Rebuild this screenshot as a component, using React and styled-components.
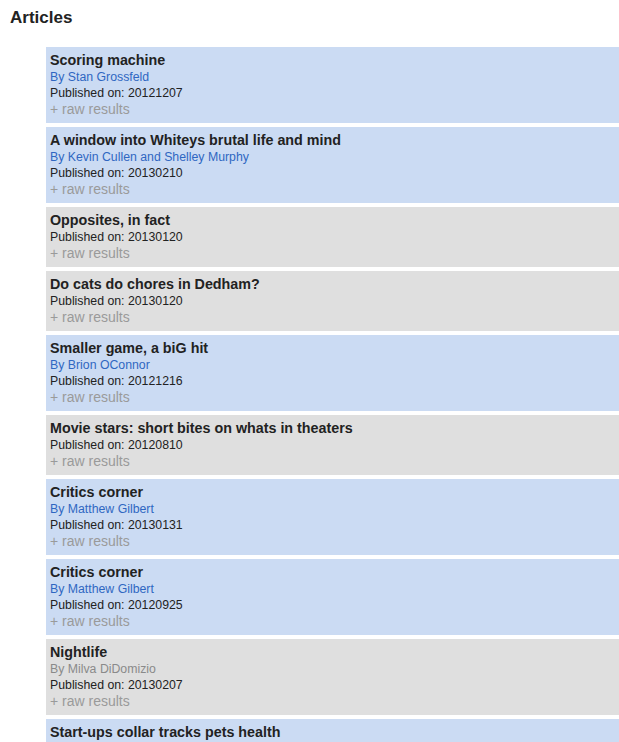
import React from "react";
import styled, { createGlobalStyle } from "styled-components";

const GlobalStyle = createGlobalStyle`
  html, body {
    margin: 0;
    padding: 0;
    background: #ffffff;
    font-family: "Liberation Sans", Arial, Helvetica, sans-serif;
  }
`;

const Page = styled.div`
  padding: 8px 0 0 10px;
`;

const Heading = styled.h2`
  margin: 0;
  font-size: 17px;
  line-height: 20px;
  font-weight: bold;
  color: #222222;
`;

const List = styled.ul`
  list-style: none;
  margin: 19px 0 0 36px;
  padding: 0;
  display: flex;
  flex-direction: column;
  gap: 4px;
`;

const Card = styled.li`
  background: ${(p) => (p.$highlight ? "#cbdbf3" : "#dfdfdf")};
  padding: 4px 4px 6px 4px;
  display: flex;
  flex-direction: column;
`;

const Title = styled.div`
  font-size: 14.3px;
  line-height: 18px;
  font-weight: bold;
  color: #222222;
`;

const Byline = styled.div`
  font-size: 12.3px;
  line-height: 16px;
  color: ${(p) => (p.$muted ? "#8a8a8a" : "#2f67c2")};
`;

const Meta = styled.div`
  font-size: 12.3px;
  line-height: 16px;
  color: #222222;
`;

const Raw = styled.div`
  font-size: 14px;
  line-height: 16px;
  color: #9a9a9a;
`;

const articles = [
  { title: "Scoring machine", by: "By Stan Grossfeld", date: "20121207", hl: true },
  { title: "A window into Whiteys brutal life and mind", by: "By Kevin Cullen and Shelley Murphy", date: "20130210", hl: true },
  { title: "Opposites, in fact", date: "20130120" },
  { title: "Do cats do chores in Dedham?", date: "20130120" },
  { title: "Smaller game, a biG hit", by: "By Brion OConnor", date: "20121216", hl: true },
  { title: "Movie stars: short bites on whats in theaters", date: "20120810" },
  { title: "Critics corner", by: "By Matthew Gilbert", date: "20130131", hl: true },
  { title: "Critics corner", by: "By Matthew Gilbert", date: "20120925", hl: true },
  { title: "Nightlife", by: "By Milva DiDomizio", date: "20130207", muted: true },
  { title: "Start-ups collar tracks pets health", hl: true, partial: true },
];

export default function App() {
  return (
    <>
      <GlobalStyle />
      <Page>
        <Heading>Articles</Heading>
        <List>
          {articles.map((a, i) => (
            <Card key={i} $highlight={a.hl}>
              <Title>{a.title}</Title>
              {a.by && <Byline $muted={a.muted}>{a.by}</Byline>}
              {a.date && <Meta>Published on: {a.date}</Meta>}
              {!a.partial && <Raw>+ raw results</Raw>}
            </Card>
          ))}
        </List>
      </Page>
    </>
  );
}
